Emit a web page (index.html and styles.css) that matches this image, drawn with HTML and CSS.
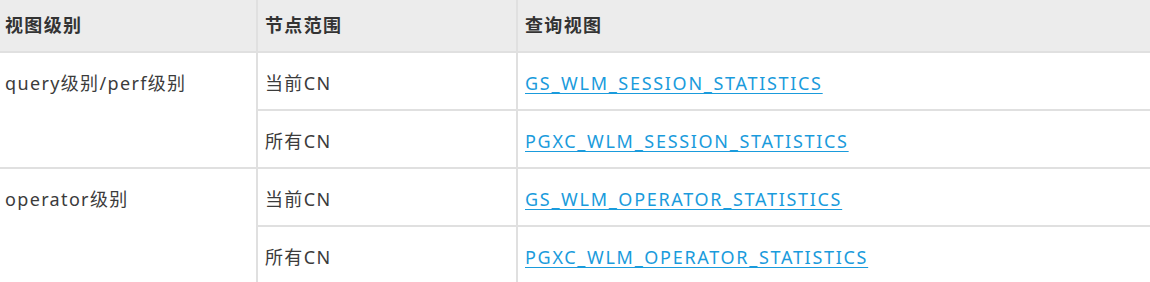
FILE: index.html
```html
<!DOCTYPE html>
<html lang="zh">
<head>
<meta charset="utf-8">
<link rel="stylesheet" href="styles.css">
</head>
<body>
<table class="tbl">
  <colgroup>
    <col class="c1"><col class="c2"><col class="c3">
  </colgroup>
  <thead>
    <tr><th class="first">视图级别</th><th>节点范围</th><th>查询视图</th></tr>
  </thead>
  <tbody>
    <tr><td class="first" rowspan="2">query级别/perf级别</td><td>当前CN</td><td><a href="#">GS_WLM_SESSION_STATISTICS</a></td></tr>
    <tr><td>所有CN</td><td><a href="#">PGXC_WLM_SESSION_STATISTICS</a></td></tr>
    <tr><td class="first" rowspan="2">operator级别</td><td>当前CN</td><td><a href="#">GS_WLM_OPERATOR_STATISTICS</a></td></tr>
    <tr><td>所有CN</td><td><a href="#">PGXC_WLM_OPERATOR_STATISTICS</a></td></tr>
  </tbody>
</table>
</body>
</html>
```
FILE: styles.css
```css
html, body {
  margin: 0;
  padding: 0;
  background: #fff;
}
.tbl {
  border-collapse: collapse;
  width: 1152px;
  table-layout: fixed;
  font-family: "Noto Sans", "Noto Sans CJK SC", sans-serif;
  font-size: 18px;
  letter-spacing: 1.35px;
  color: #3b3b3b;
}
.c1 { width: 257px; }
.c2 { width: 260px; }
.tbl th, .tbl td {
  border: 2px solid #e0e0e0;
  border-top: 0;
  text-align: left;
  vertical-align: top;
  padding: 0 7px;
  line-height: 22px;
}
.tbl th {
  background: #ececec;
  font-weight: bold;
  color: #333;
  height: 50px;
  vertical-align: middle;
  padding-bottom: 1px;
}
.tbl td {
  height: 37px;
  padding-top: 19px;
  padding-bottom: 0;
}
.tbl .first {
  border-left: 0;
  padding-left: 5px;
}
.tbl a {
  color: #1a9bdc;
  letter-spacing: 1.7px;
  text-decoration: underline;
  text-underline-offset: 3px;
}
```
